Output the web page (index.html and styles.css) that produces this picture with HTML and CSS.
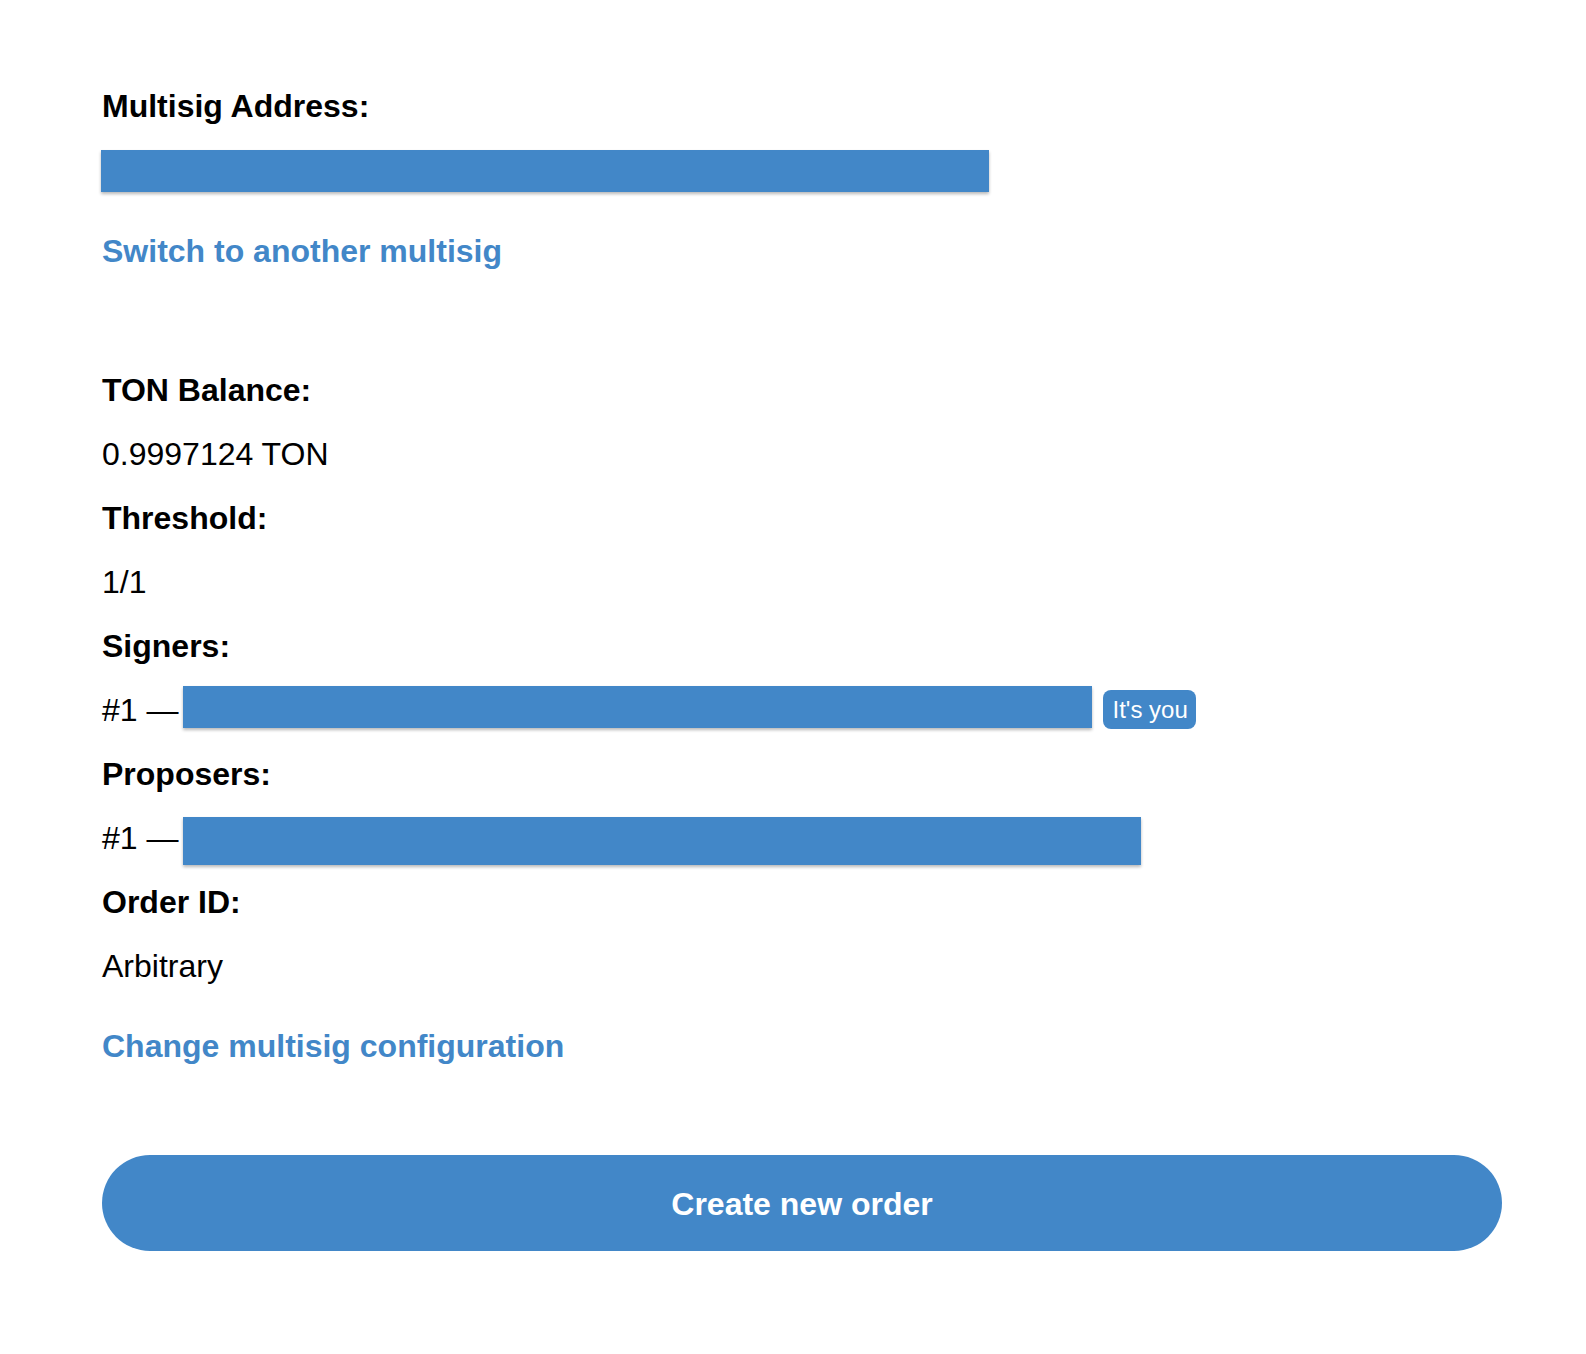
FILE: index.html
```html
<!DOCTYPE html>
<html lang="en">
<head>
<meta charset="utf-8">
<title>Multisig</title>
<link rel="stylesheet" href="styles.css">
</head>
<body>
<main class="page">
  <section class="address-block">
    <div class="label">Multisig Address:</div>
    <div class="redact redact-address"></div>
    <a class="link link-switch" href="#">Switch to another multisig</a>
  </section>

  <section class="info">
    <div class="label">TON Balance:</div>
    <div class="value">0.9997124 TON</div>
    <div class="label">Threshold:</div>
    <div class="value">1/1</div>
    <div class="label">Signers:</div>
    <div class="value row">
      <span class="num">#1 —</span>
      <span class="redact redact-signer"></span>
      <span class="badge">It's you</span>
    </div>
    <div class="label">Proposers:</div>
    <div class="value row">
      <span class="num">#1 —</span>
      <span class="redact redact-proposer"></span>
    </div>
    <div class="label">Order ID:</div>
    <div class="value">Arbitrary</div>
    <a class="link link-config" href="#">Change multisig configuration</a>
  </section>

  <button class="primary" type="button">Create new order</button>
</main>
</body>
</html>
```

FILE: styles.css
```css
* { box-sizing: border-box; }

html, body {
  margin: 0;
  padding: 0;
  background: #ffffff;
}

body {
  font-family: "Liberation Sans", Arial, Helvetica, sans-serif;
  font-size: 32px;
  color: #000000;
}

.page {
  width: 1503px;
  padding: 74px 0 100px 102px;
  display: flex;
  flex-direction: column;
  align-items: flex-start;
}

.label {
  font-weight: 700;
  line-height: 64px;
  height: 64px;
}

.value {
  line-height: 64px;
  height: 64px;
}

.address-block {
  display: flex;
  flex-direction: column;
  align-items: flex-start;
}

.redact {
  display: block;
  background: #4287c8;
  box-shadow: 0 2px 3px rgba(0, 0, 0, 0.28);
}

.redact-address {
  width: 888px;
  height: 42px;
  margin-top: 12px;
  margin-left: -1px;
}

.link {
  display: block;
  color: #4287c8;
  font-weight: 700;
  text-decoration: none;
  line-height: 64px;
  height: 64px;
}

.link-switch {
  margin-top: 27px;
}

.info {
  margin-top: 75px;
  display: flex;
  flex-direction: column;
  align-items: flex-start;
}

.row {
  display: flex;
  align-items: center;
}

.num {
  white-space: nowrap;
}

.redact-signer {
  width: 909px;
  height: 42px;
  margin-left: 5px;
  margin-bottom: 6px;
}

.redact-proposer {
  width: 958px;
  height: 48px;
  margin-left: 5px;
  margin-top: 6px;
}

.badge {
  margin-left: 11px;
  margin-bottom: 2px;
  background: #4287c8;
  color: #ffffff;
  font-size: 24px;
  line-height: 31px;
  padding: 4px 8px 4px 9px;
  border-radius: 8px;
  white-space: nowrap;
}

.link-config {
  margin-top: 16px;
}

.primary {
  margin-top: 77px;
  width: 1400px;
  height: 96px;
  border: none;
  border-radius: 48px;
  background: #4287c8;
  color: #ffffff;
  font-family: "Liberation Sans", Arial, Helvetica, sans-serif;
  font-size: 32px;
  font-weight: 700;
  padding: 2px 0 0;
  cursor: pointer;
}
```
